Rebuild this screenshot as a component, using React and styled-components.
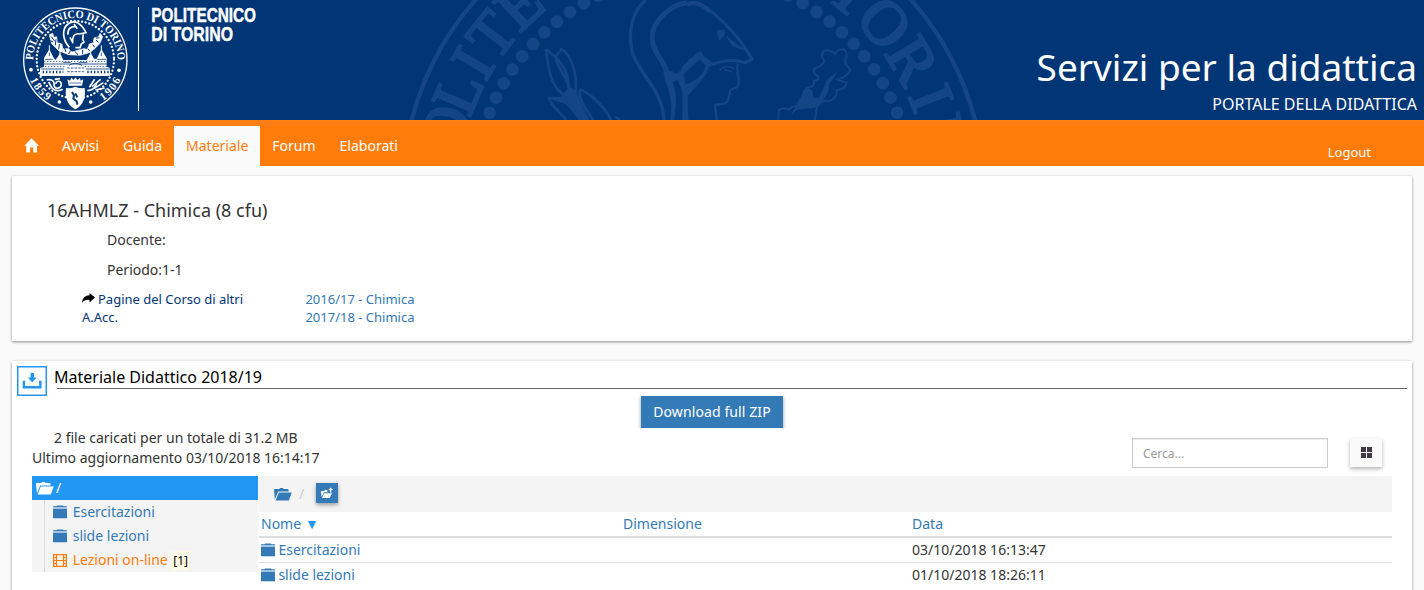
import React from "react";
import styled, { createGlobalStyle } from "styled-components";

const Global = createGlobalStyle`
  *, *::before, *::after { box-sizing: border-box; }
  html, body { margin: 0; height: 590px; overflow: hidden; }
  body {
    background: #fafafa;
    color: #333;
    font: 14px/20px "Noto Sans", sans-serif;
  }
  a { color: inherit; text-decoration: none; }
  svg { display: block; flex: none; }
`;

const Header = styled.header`
  position: relative;
  display: flex;
  justify-content: space-between;
  height: 120px;
  background: #003576;
  color: #fff;
  overflow: hidden;
`;
const Watermark = styled.svg`
  position: absolute;
  left: 400px;
  top: 0;
`;
const Titles = styled.div`
  display: flex;
  flex-direction: column;
  align-items: flex-end;
  padding: 41px 7px 0 0;
`;
const SiteTitle = styled.h1`
  margin: 0;
  font-size: 37px;
  font-weight: 400;
  line-height: 52px;
`;
const SiteSubtitle = styled.div`
  font-size: 16px;
  line-height: 22px;
`;

const Nav = styled.nav`
  display: flex;
  align-items: stretch;
  height: 46px;
  padding: 6px 53px 0 12px;
  background: #ff7c0a;
  color: #fff;
  box-shadow: inset 0 6px 0 #ff7f14;
`;
const Tab = styled.a`
  display: flex;
  align-items: center;
  padding: 0 12px;
  background: ${(p) => (p.$active ? "#fafafa" : "transparent")};
  color: ${(p) => (p.$active ? "#ff7c0a" : "#fff")};
  svg { margin: 0 -1px 2px 0; }
`;
const Logout = styled.a`
  margin: 16px 0 0 auto;
  font-size: 13px;
  line-height: 20px;
`;

const Main = styled.main`
  display: flex;
  flex-direction: column;
  gap: 20px;
  padding: 10px 12px 0;
`;
const Card = styled.section`
  height: ${(p) => p.$height}px;
  background: #fff;
  box-shadow: 0 1px 3px rgba(0, 0, 0, 0.3), 0 1px 2px rgba(0, 0, 0, 0.16);
`;

const CourseTitle = styled.h2`
  margin: 0;
  padding: 22px 0 0 35px;
  font-size: 18px;
  font-weight: 400;
  line-height: 25px;
`;
const CourseLine = styled.div`
  margin-left: 95px;
  padding-top: ${(p) => p.$top}px;
`;
const YearRow = styled.div`
  display: flex;
  padding: 10px 0 0 70px;
  font-size: 13px;
  line-height: 18px;
`;
const YearLabel = styled.div`
  width: 223.4px;
  padding-right: 50px;
  color: #003576;
  svg { display: inline-block; margin-right: 3px; }
`;
const YearLinks = styled.div`
  display: flex;
  flex-direction: column;
  color: #337ab7;
`;

const SectionHead = styled.div`
  display: flex;
  padding: 5px 5px 0;
`;
const SectionTitle = styled.h3`
  flex: 1;
  height: 23px;
  margin: 0 0 0 10px;
  border-bottom: 1px solid #666;
  color: #000;
  font-size: 16px;
  font-weight: 400;
  line-height: 22px;
  text-indent: -3px;
`;
const ZipRow = styled.div`
  display: flex;
  justify-content: center;
  height: 32px;
  overflow: hidden;
`;
const ZipButton = styled.button`
  width: 142px;
  height: 32px;
  padding: 0;
  border: 0;
  background: #337ab7;
  color: #fff;
  font: 14px/32px "Noto Sans", sans-serif;
  letter-spacing: 0.1px;
  box-shadow: 0 1px 4px rgba(0, 0, 0, 0.4);
`;
const Summary = styled.div`
  display: flex;
  justify-content: space-between;
  height: 48px;
  padding: 0 30px 0 20px;
`;
const Stats = styled.div`
  span { display: block; }
  span:first-child { padding-left: 22px; }
`;
const Tools = styled.div`
  display: flex;
  gap: 22px;
  padding: 10px 0 0;
`;
const Search = styled.input`
  width: 196px;
  height: 30px;
  padding: 0 10px;
  border: 1px solid #ccc;
  border-radius: 0;
  background: #fff;
  box-shadow: inset 0 1px 1px rgba(0, 0, 0, 0.075);
  font: 12px "Noto Sans", sans-serif;
  &::placeholder { color: #999; opacity: 1; }
`;
const GridButton = styled.button`
  display: flex;
  justify-content: center;
  align-items: center;
  width: 32px;
  height: 29px;
  padding: 0;
  border: 0;
  background: #fafafa;
  box-shadow: 0 2px 4px rgba(0, 0, 0, 0.3);
`;

const Browser = styled.div`
  display: flex;
  padding: 0 20px;
  color: #337ab7;
`;
const Tree = styled.div`
  width: 227px;
  height: 96px;
  background: #f4f4f4;
  border-right: 1px solid #fafafa;
`;
const TreeRoot = styled.div`
  display: flex;
  align-items: center;
  gap: 2px;
  height: 24px;
  padding-left: 4px;
  background: #2196f3;
  color: #fff;
`;
const TreeChildren = styled.div`
  margin-left: 12px;
  border-left: 1px solid #ddd;
`;
const TreeItem = styled.a`
  display: flex;
  align-items: center;
  height: 24px;
  padding-left: 8px;
  color: ${(p) => (p.$accent ? "#ff7c0a" : "#337ab7")};
  svg { margin-right: 5.7px; }
`;
const Count = styled.span`
  margin-left: 3.5px;
  padding: 0 2px;
  background: #fcf8e3;
  color: #000;
  font-size: 12px;
  line-height: 19px;
`;
const Files = styled.div`
  flex: 1;
`;
const Breadcrumb = styled.div`
  display: flex;
  align-items: center;
  height: 36px;
  padding-left: 15px;
  background: #f4f4f4;
  color: #ccc;
  span { margin: 0 12px 0 7px; }
`;
const UpButton = styled.button`
  display: flex;
  align-items: center;
  justify-content: center;
  width: 22px;
  height: 20px;
  margin-bottom: 2px;
  padding: 0;
  border: 0;
  background: #337ab7;
  box-shadow: 0 2px 4px rgba(0, 0, 0, 0.35);
`;
const Row = styled.div`
  display: grid;
  grid-template-columns: 362px 289px 1fr;
  height: ${(p) => (p.$head ? 26 : 25)}px;
  padding: 0 0 0 2px;
  line-height: 24px;
  border-bottom: ${(p) => (p.$head ? 2 : 1)}px solid #ddd;
  &:last-child { border-bottom: 0; }
`;
const Name = styled.a`
  display: flex;
  align-items: center;
  height: 24px;
  gap: 3.4px;
`;
const DateCell = styled.span`
  color: #333;
`;
const SortMark = styled.span`
  margin-left: 4px;
  color: #2196f3;
`;

/* Letters on the big seal: character and angle from the vertical axis */
const bigLetters = [
  ["O", -75.5], ["L", -66.8], ["I", -59.4], ["T", -51.8], ["E", -42.8],
  ["T", 38.5], ["O", 48.4], ["R", 58.8], ["I", 68.3], ["N", 77.5],
];
const CX = 880;
const CY = 579;
const bigDots = [];
for (let a = -68.5; a < 75; a += 4.28) bigDots.push(a);

function BigSeal() {
  return (
    <Watermark width="590" height="120" viewBox="0 0 1770 360" fill="none" stroke="#144686" strokeWidth="9">
      <circle cx={CX} cy={CY} r="873" strokeWidth="13" />
      <g fill="#144686" stroke="none">
        {bigDots.map((a) => {
          const t = (a * Math.PI) / 180;
          return <circle key={a} cx={CX + 657 * Math.sin(t)} cy={CY - 657 * Math.cos(t)} r="19" />;
        })}
        {bigLetters.map(([c, a]) => (
          <text
            key={a}
            transform={`rotate(${a} ${CX} ${CY})`}
            x={CX}
            y={CY - 706}
            textAnchor="middle"
            fontFamily="Liberation Serif, serif"
            fontSize="188"
            stroke="#144686"
            strokeWidth="8"
          >
            {c}
          </text>
        ))}
      </g>
      <path strokeWidth="8" d="M437 147 C447 195 443 245 490 285 M437 147 L468 172 C495 200 507 235 505 264 M468 168 L485 147 C512 165 532 215 527 275 M466 175 C480 215 505 240 508 268" />
      <path fill="#144686" d="M445 292 L482 294 L508 264 L528 272 L536 300 L565 360 L540 360 L500 310 Z" strokeWidth="5" />
      <path strokeWidth="8" d="M445 292 C455 320 480 335 498 360 M540 268 C580 285 618 325 638 370 M540 268 C534 300 560 330 580 360 M645 350 L660 360" />
      <path d="M738 0 C690 38 684 110 698 160 C718 222 788 270 792 360" strokeWidth="10" />
      <path d="M860 8 C810 15 755 65 756 115 C758 160 795 185 800 215" strokeWidth="15" />
      <path fill="#144686" d="M790 205 L830 222 L900 162 L940 190 L925 196 L898 178 L850 222 L858 270 L905 240 L862 288 L860 360 L848 360 L848 270 L832 238 L818 246 C834 290 824 325 822 360 L812 360 C820 310 808 265 795 240 Z" strokeWidth="2" />
      <g transform="translate(840 0)">
        <path d="M0 17 C30 4 62 8 95 35 C135 70 180 112 216 178 L196 188 C155 175 125 182 82 198" strokeWidth="9" />
        <path d="M82 196 L60 160 L28 186 C3 208 -4 235 10 262 C45 250 78 232 82 196 M15 265 L20 360" strokeWidth="11" />
        <path d="M20 14 C45 2 70 15 92 36 M10 275 L40 253" strokeWidth="13" />
        <path d="M174 190 C164 220 187 242 172 260 C163 270 145 263 150 280 L144 300 C140 315 120 312 105 315 L110 360" strokeWidth="7" />
        <path d="M118 210 C134 196 146 198 160 204 M132 208 L156 216" strokeWidth="5" />
        <path fill="#144686" d="M111 93 L133 91 L133 105 L118 121 Z M139 109 L192 149 L160 139 Z" strokeWidth="3" />
        <path strokeWidth="6" d="M295 360 L296 330 Q312 320 326 328 Q344 312 364 324 M376 292 Q362 272 385 262 Q405 262 402 242 Q420 240 413 228 Q394 216 406 204 Q428 198 432 184 Q418 154 440 151 Q458 152 464 162 Q474 145 492 148 Q505 158 496 178 Q494 192 504 200 Q518 214 500 224 Q488 236 470 239 L500 248 Q498 268 470 270 Q474 294 445 304 Q424 300 412 312 L405 360" />
        <path fill="#144686" strokeWidth="3" d="M366 286 L380 264 L396 272 L399 296 L418 294 L442 240 L470 218 L448 250 L440 282 L420 312 L404 322 L350 328 L336 344 L346 322 Z" />
      </g>
    </Watermark>
  );
}

function Logo() {
  return (
    <svg width="280" height="120" viewBox="0 0 840 360" fill="none" stroke="#fff" role="img" aria-label="Politecnico di Torino">
      <defs>
        <path id="seal-top" d="M 99 181 A 127 127 0 1 1 353 181" />
        <path id="seal-low" d="M 77 179 A 149 149 0 0 0 375 179" />
      </defs>
      <circle cx="226" cy="179" r="155" strokeWidth="4" />
      <circle cx="226" cy="179" r="116" strokeWidth="7" strokeLinecap="round" strokeDasharray="0.1 11" />
      <g fill="#fff" stroke="none" fontFamily="Liberation Serif, serif" fontWeight="700" fontSize="34">
        <text><textPath href="#seal-top" startOffset="1" textLength="398" lengthAdjust="spacingAndGlyphs">POLITECNICO DI TORINO</textPath></text>
        <text><textPath href="#seal-low" startOffset="62" textLength="84">1859</textPath></text>
        <text><textPath href="#seal-low" startOffset="322" textLength="84">1906</textPath></text>
        <circle cx="93" cy="209" r="5.5" />
        <circle cx="357" cy="211" r="5.5" />
        <circle cx="178" cy="306" r="5.5" />
        <circle cx="272" cy="306" r="5.5" />
      </g>
      {/* helmeted head */}
      <path strokeWidth="5" d="M208 142 C188 120 184 88 204 72 C224 58 242 68 258 98 L238 102 C222 98 216 112 218 130 M204 104 C202 88 212 78 226 80 M250 103 L248 118 L252 126 L244 132 L240 143 L226 143 M218 126 L210 112 M222 72 L232 86" />
      {/* garland */}
      <g fill="#fff" strokeWidth="2">
        <path d="M148 104 L158 100 L162 112 L170 110 L172 128 L186 132 L188 146 L206 146 L216 156 L236 150 L252 146 L262 148 L268 132 L280 128 L282 114 L296 110 L300 100 L308 110 L300 130 L284 146 L268 158 L240 166 L206 164 L176 152 L154 130 Z" />
      </g>
      <path stroke="#003576" strokeWidth="3" d="M154 110 L164 124 M168 118 L166 136 M178 132 L176 148 M192 140 L198 156 M212 150 L206 162 M224 154 L234 164 M248 150 L248 162 M264 146 L270 154 M278 134 L284 142 M288 120 L296 128 M160 126 L150 122 M298 114 L288 114" />
      {/* castle */}
      <g fill="#fff" stroke="none">
        <path d="M120 228 L120 204 L132 200 L132 174 L148 148 L160 172 L166 180 L174 170 L180 158 L190 180 L260 180 L272 158 L282 176 L290 176 L304 148 L320 174 L320 200 L330 204 L330 228 Z" />
      </g>
      <g stroke="#003576" strokeWidth="2.4">
        <path d="M136 178 H158 M292 178 H318 M190 187 H212 M236 187 H262 M132 192 H322 M122 207 H192 M258 207 H330" />
        <path strokeDasharray="4 5" d="M132 184 H322 M126 200 H198 M254 200 H326" />
        <path strokeWidth="8" strokeDasharray="4 6" d="M128 216 H190 M262 216 H326" />
        <path strokeDasharray="7 4" d="M202 204 H252 M202 215 H252" />
        <path d="M148 158 V168 M304 158 V168 M207 196 Q226 184 246 196" />
      </g>
      <path strokeWidth="3" d="M148 136 V152 M180 146 V162 M272 146 V162 M304 136 V152" />
      {/* horn, wheat and shield */}
      <path strokeWidth="5" d="M140 240 C155 236 164 244 162 256 C164 270 184 266 184 252 C182 240 166 242 168 252 M146 246 L156 264 C170 278 182 270 188 268 M164 238 L180 236 M262 272 C276 272 286 264 290 250 M268 262 L284 238 M276 260 L302 238 M282 266 L310 248 M286 270 L314 264" />
      <g fill="#fff" stroke="none">
        <path d="M202 238 L210 242 L214 233 L221 240 L226 232 L232 240 L240 234 L242 242 L250 238 L246 257 L206 257 Z" />
        <path d="M198 264 Q212 266 226 260 Q240 266 254 264 Q260 310 226 328 Q192 310 198 264 Z" />
      </g>
      <path stroke="#003576" strokeWidth="6" d="M216 276 L222 286 L220 296 L230 304 L232 314 M226 280 L232 292" />
      <path stroke="#003576" strokeWidth="2" d="M208 249 H244" />
      <path strokeWidth="3" d="M415.5 21 V333" />
      <g fill="#fff" strokeWidth="1.4" fontFamily="Liberation Sans, sans-serif" fontWeight="700" fontSize="61">
        <text x="454" y="66" textLength="314" lengthAdjust="spacingAndGlyphs">POLITECNICO</text>
        <text x="454" y="124" textLength="245" lengthAdjust="spacingAndGlyphs">DI TORINO</text>
      </g>
    </svg>
  );
}

const HomeIcon = () => (
  <svg width="15" height="15" viewBox="0 0 15 15" fill="#fff">
    <path d="M7.5 0.2 L15 8 H13 V14.6 H9.2 V9.4 H6 V14.6 H2.2 V8 H0.2 Z" />
  </svg>
);
const ShareIcon = () => (
  <svg width="13" height="11" viewBox="0 0 13 11">
    <path d="M7.5 0 L13 4.6 L7.5 9.4 V6.9 C4 6.6 1.5 7.4 0 10 C0.3 5 3 2.4 7.5 2.2 Z" fill="#000" />
  </svg>
);
const DownloadIcon = () => (
  <svg width="30" height="30" viewBox="0 0 30 30">
    <rect x="0.75" y="0.75" width="28.5" height="28.5" fill="#fff" stroke="#2196f3" strokeWidth="1.5" />
    <path d="M13.6 7 H17 V11.6 H19.6 L15.2 16.4 L10.9 11.6 H13.6 Z" fill="#2196f3" />
    <path d="M8.2 16 H6.9 V21.3 H23.4 V16 H22" fill="none" stroke="#2196f3" strokeWidth="2.4" />
  </svg>
);
const FolderIcon = () => (
  <svg width="14" height="14" viewBox="0 0 14 14">
    <path d="M0 4 H14 V13.3 H0 Z" fill="#337ab7" />
    <path d="M0 2 H14 V4 H0 Z" fill="#a3c2dd" />
    <path d="M4 0.4 H10 L10.6 1.2 H14 V2 H0 V1.2 H3.4 Z" fill="#337ab7" />
  </svg>
);
const OpenFolderIcon = ({ color }) => (
  <svg width="18" height="13" viewBox="0 0 18 13" fill={color}>
    <path d="M0 1.6 L0.6 1 H5.6 V0.6 L6.2 0 H8.8 L9.5 1 H13.8 L14.6 1.8 V3.4 H4.2 L0.9 11.5 Z" />
    <path d="M4.8 4.6 H17.8 L14.8 12.6 H1.6 Z" />
  </svg>
);
const UpFolderIcon = () => (
  <svg width="12" height="12" viewBox="0 0 12 12" fill="#fff">
    <path d="M0 4 H3 L4 3 H6.4 V5.2 H3 L0.5 10 Z" />
    <path d="M3.2 6.2 H11 L8.6 11 H1 Z" />
    <path d="M7.4 3 L9.6 0.4 L12 3 H10.4 V5.4 H8.8 V3 Z" />
  </svg>
);
const FilmIcon = () => (
  <svg width="14" height="13" viewBox="0 0 14 13" fill="none" stroke="#ff7c0a">
    <path d="M0.6 0.6 H13.4 V12.4 H0.6 Z M3.5 0.5 V12.5 M10.5 0.5 V12.5 M3.5 6.5 H10.5 M0.5 3.5 H3.5 M0.5 6.5 H3.5 M0.5 9.5 H3.5 M10.5 3.5 H13.5 M10.5 6.5 H13.5 M10.5 9.5 H13.5" strokeWidth="1.2" />
  </svg>
);
const GridIcon = () => (
  <svg width="11" height="11" viewBox="0 0 11 11" fill="#3f3b45">
    <path d="M0 0 H5 V5 H0 Z M6 0 H11 V5 H6 Z M0 6 H5 V11 H0 Z M6 6 H11 V11 H6 Z" />
  </svg>
);

const files = [
  { name: "Esercitazioni", date: "03/10/2018 16:13:47" },
  { name: "slide lezioni", date: "01/10/2018 18:26:11" },
];

export default function App() {
  return (
    <>
      <Global />
      <Header>
        <BigSeal />
        <Logo />
        <Titles>
          <SiteTitle>Servizi per la didattica</SiteTitle>
          <SiteSubtitle>PORTALE DELLA DIDATTICA</SiteSubtitle>
        </Titles>
      </Header>
      <Nav>
        <Tab aria-label="Home"><HomeIcon /></Tab>
        <Tab>Avvisi</Tab>
        <Tab>Guida</Tab>
        <Tab $active>Materiale</Tab>
        <Tab>Forum</Tab>
        <Tab>Elaborati</Tab>
        <Logout>Logout</Logout>
      </Nav>
      <Main>
        <Card $height={165}>
          <CourseTitle>16AHMLZ - Chimica (8 cfu)</CourseTitle>
          <CourseLine $top={7}>Docente:</CourseLine>
          <CourseLine $top={10}>Periodo:1-1</CourseLine>
          <YearRow>
            <YearLabel><ShareIcon />Pagine del Corso di altri A.Acc.</YearLabel>
            <YearLinks>
              <a>2016/17 - Chimica</a>
              <a>2017/18 - Chimica</a>
            </YearLinks>
          </YearRow>
        </Card>
        <Card $height={260}>
          <SectionHead>
            <DownloadIcon />
            <SectionTitle>Materiale Didattico 2018/19</SectionTitle>
          </SectionHead>
          <ZipRow><ZipButton>Download full ZIP</ZipButton></ZipRow>
          <Summary>
            <Stats>
              <span>2 file caricati per un totale di 31.2 MB</span>
              <span>Ultimo aggiornamento 03/10/2018 16:14:17</span>
            </Stats>
            <Tools>
              <Search placeholder="Cerca..." />
              <GridButton aria-label="Griglia"><GridIcon /></GridButton>
            </Tools>
          </Summary>
          <Browser>
            <Tree>
              <TreeRoot><OpenFolderIcon color="#fff" />/</TreeRoot>
              <TreeChildren>
                {files.map((f) => (
                  <TreeItem key={f.name}><FolderIcon />{f.name}</TreeItem>
                ))}
                <TreeItem $accent><FilmIcon />Lezioni on-line<Count>[1]</Count></TreeItem>
              </TreeChildren>
            </Tree>
            <Files>
              <Breadcrumb>
                <OpenFolderIcon color="#337ab7" />
                <span>/</span>
                <UpButton aria-label="Su"><UpFolderIcon /></UpButton>
              </Breadcrumb>
              <Row $head>
                <span>Nome<SortMark>▼</SortMark></span>
                <span>Dimensione</span>
                <span>Data</span>
              </Row>
              {files.map((f) => (
                <Row key={f.name}>
                  <Name><FolderIcon />{f.name}</Name>
                  <span />
                  <DateCell>{f.date}</DateCell>
                </Row>
              ))}
            </Files>
          </Browser>
        </Card>
      </Main>
    </>
  );
}
